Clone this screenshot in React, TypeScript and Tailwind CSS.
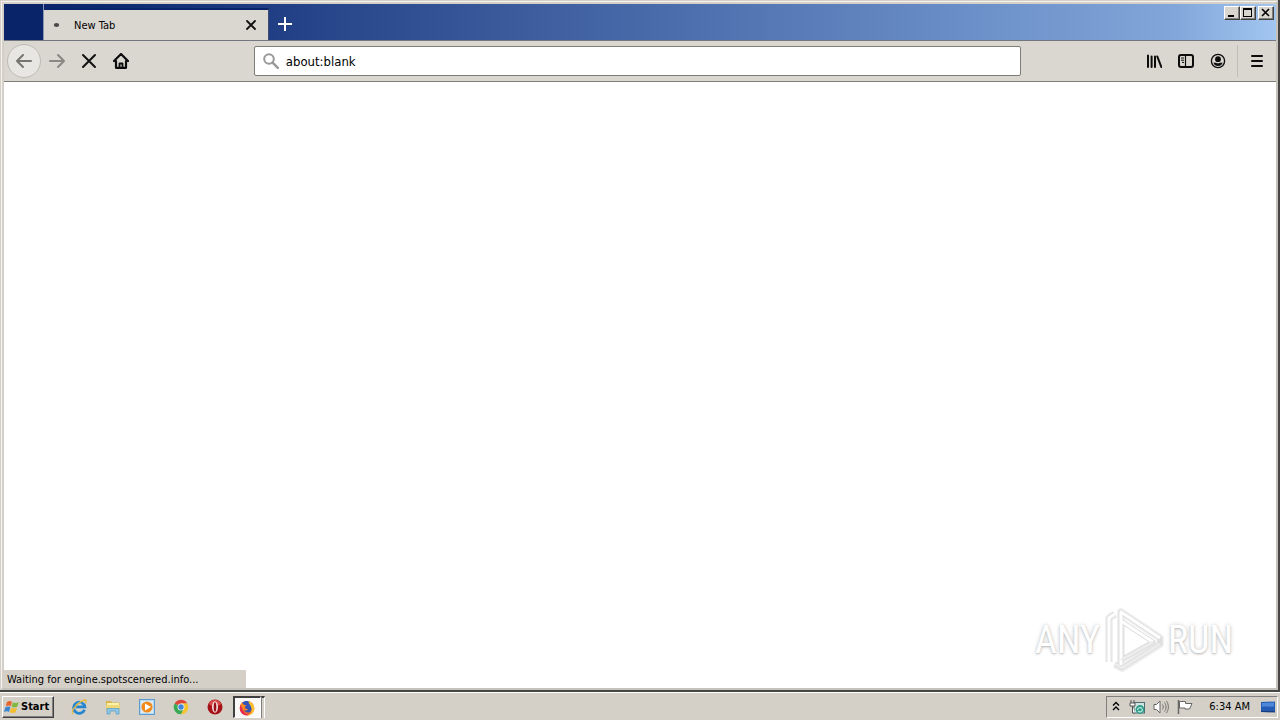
import { useState } from "react";
import type { ReactNode } from "react";

function CaptionButton({ label, children }: { label: string; children: ReactNode }) {
  return (
    <button
      type="button"
      aria-label={label}
      className="flex h-[14px] w-4 items-center justify-center border border-t-white border-l-white border-r-[#404040] border-b-[#404040] bg-[#d9d6cf] shadow-[inset_-1px_-1px_0_#808080]"
    >
      {children}
    </button>
  );
}

function ToolButton({ label, children }: { label: string; children: ReactNode }) {
  return (
    <button type="button" aria-label={label} className="flex size-8 items-center justify-center">
      {children}
    </button>
  );
}

function TabStrip() {
  return (
    <header className="flex h-9 items-stretch bg-[linear-gradient(90deg,#0a246a_0%,#0c286f_8%,#27458a_25%,#6b8fc8_76%,#82a6d9_92%,#a2c6f0_100%)]">
      <div className="w-10 border-r border-[#8a94b5] bg-[#0a246a]" />
      <div className="mt-1 flex w-[225px] items-center border-t-2 border-r border-t-[#0a246a] border-r-[#404d70] bg-[#dad7d1] pr-[7px] pl-2">
        <svg className="size-4" viewBox="0 0 16 16" aria-hidden="true">
          <ellipse cx="4.5" cy="8" rx="2.7" ry="2" fill="#4a4a4a" />
        </svg>
        <span className="ml-[6px] grow pt-px text-[11px] leading-4 text-black">New Tab</span>
        <button type="button" aria-label="Close tab" className="flex size-5 items-center justify-center">
          <svg className="size-3" viewBox="0 0 12 12" aria-hidden="true">
            <path d="M2 2l8 8M10 2l-8 8" stroke="#111" strokeWidth="1.8" strokeLinecap="round" />
          </svg>
        </button>
      </div>
      <button type="button" aria-label="New tab" className="flex w-8 items-center justify-center pt-1">
        <svg className="size-4" viewBox="0 0 16 16" aria-hidden="true">
          <path d="M8 1v14M1 8h14" stroke="#fff" strokeWidth="2" />
        </svg>
      </button>
      <div className="ml-auto flex pt-[2px] pr-[2px]">
        <CaptionButton label="Minimize">
          <svg className="size-3" viewBox="0 0 12 12" shapeRendering="crispEdges" aria-hidden="true">
            <path d="M2 8h6v2H2z" />
          </svg>
        </CaptionButton>
        <CaptionButton label="Maximize">
          <svg className="size-3" viewBox="0 0 12 12" shapeRendering="crispEdges" aria-hidden="true">
            <path fillRule="evenodd" d="M1 1h9v9H1zM2 3v6h7V3z" />
          </svg>
        </CaptionButton>
        <div className="w-[2px]" />
        <CaptionButton label="Close">
          <svg className="size-3" viewBox="0 0 12 12" aria-hidden="true">
            <path d="M2 2l7 7M9 2l-7 7" stroke="#000" strokeWidth="1.6" />
          </svg>
        </CaptionButton>
      </div>
    </header>
  );
}

function Toolbar() {
  const [address, setAddress] = useState("about:blank");
  return (
    <nav className="flex h-[42px] items-center border-t border-b border-t-[#737780] border-b-[#807e7a] bg-[#dad7d1]">
      <div className="flex flex-[250] items-center pl-[3px]">
        <button
          type="button"
          aria-label="Back"
          className="flex size-[34px] items-center justify-center rounded-full border border-[#bfbcb7] bg-[#e8e6e2]"
        >
          <svg className="size-4" viewBox="0 0 16 16" fill="none" stroke="#777571" strokeWidth="2" strokeLinecap="round" strokeLinejoin="round" aria-hidden="true">
            <path d="M15 8H1M7 2L1 8l6 6" />
          </svg>
        </button>
        <ToolButton label="Forward">
          <svg className="size-4" viewBox="0 0 16 16" fill="none" stroke="#8a8884" strokeWidth="2" strokeLinecap="round" strokeLinejoin="round" aria-hidden="true">
            <path d="M1 8h14M9 2l6 6-6 6" />
          </svg>
        </ToolButton>
        <ToolButton label="Stop">
          <svg className="size-4" viewBox="0 0 16 16" fill="none" stroke="#111" strokeWidth="2" strokeLinecap="round" aria-hidden="true">
            <path d="M2 2l12 12M14 2L2 14" />
          </svg>
        </ToolButton>
        <ToolButton label="Home">
          <svg className="size-4" viewBox="0 0 16 16" fill="none" stroke="#0c0c0d" strokeWidth="2.2" strokeLinecap="round" strokeLinejoin="round" aria-hidden="true">
            <path d="M1 8l7-7 7 7M3 8v6.800h10V8" />
            <path d="M6.500 15v-4.500h3V15" strokeWidth="1.800" />
          </svg>
        </ToolButton>
      </div>
      <label className="flex h-[30px] flex-[767] items-center rounded-[2px] border border-[#7e7c77] bg-white pl-2">
        <svg className="size-4" viewBox="0 0 16 16" fill="none" stroke="#999" aria-hidden="true">
          <circle cx="6" cy="6" r="4.8" strokeWidth="2" />
          <path d="M9.6 9.6l5.2 5.2" strokeWidth="2.4" strokeLinecap="round" />
        </svg>
        <input
          type="text"
          aria-label="Search or enter address"
          value={address}
          onChange={(event) => setAddress(event.target.value)}
          className="ml-[7px] min-w-0 grow bg-transparent pt-px text-[13px] leading-5 text-black outline-none"
        />
      </label>
      <div className="flex flex-[255] items-center justify-end self-stretch pr-[3px]">
        <ToolButton label="Library">
          <svg className="size-4" viewBox="0 0 16 16" fill="none" stroke="#0c0c0d" strokeWidth="2" strokeLinecap="round" aria-hidden="true">
            <path d="M2 2.5v11.5M5.6 3.5v10.5M9 3.5v10.5M11.3 3.5l4 10.5" />
          </svg>
        </ToolButton>
        <ToolButton label="Sidebars">
          <svg className="size-4" viewBox="0 0 16 16" fill="none" stroke="#0c0c0d" aria-hidden="true">
            <rect x="1" y="2" width="14" height="12" rx="2" strokeWidth="2" />
            <path d="M7.5 3v10" strokeWidth="1.2" />
            <path d="M3 5h3M3 7.2h3M4 9.4h2" strokeWidth="1" />
          </svg>
        </ToolButton>
        <ToolButton label="Account">
          <svg className="size-4" viewBox="0 0 16 16" aria-hidden="true">
            <circle cx="8" cy="8" r="6.6" fill="none" stroke="#0c0c0d" strokeWidth="1.3" />
            <circle cx="8" cy="6.2" r="2.9" fill="#0c0c0d" />
            <path d="M3.4 9.4c1 .2 2 .4 2.6.3 1.200.7 2.800.7 4 0 .6.1 1.600-.1 2.600-.3-.6 2.200-2.400 3.600-4.600 3.600s-4-1.400-4.600-3.600z" fill="#0c0c0d" />
          </svg>
        </ToolButton>
        <div className="ml-[3px] h-8 border-l border-[#c2bfb9]" />
        <div className="ml-[3px]">
          <ToolButton label="Open menu">
            <svg className="size-4" viewBox="0 0 16 16" stroke="#0c0c0d" strokeWidth="2" strokeLinecap="round" aria-hidden="true">
              <path d="M3 3h10M3 8h10M3 13h10" />
            </svg>
          </ToolButton>
        </div>
      </div>
    </nav>
  );
}

function Watermark() {
  return (
    <div className="absolute right-[43px] bottom-4 flex items-center gap-1 font-['Roboto_Condensed','Open_Sans_Condensed','Noto_Sans_Condensed',Roboto,sans-serif] text-[38px] leading-[64px] text-white [text-shadow:0_1px_2px_#bdbdbd,0_0_4px_#d0d0d0]">
      <span>ANY</span>
      <svg className="h-16 w-[60px]" viewBox="0 0 60 64" fill="none" strokeLinejoin="round" aria-hidden="true">
        <g stroke="#f0f0f0" strokeWidth="8">
          <path d="M5 54V10l6-4M17 57V4l39 26v6L18 60l-7-4" />
        </g>
        <g stroke="#dedede" strokeWidth="5">
          <path d="M5 54V10l6-4M17 57V4l39 26v6L18 60l-7-4" />
          <path d="M17 13l32 21-32 18z" />
        </g>
        <g stroke="#fff" strokeWidth="3">
          <path d="M5 54V10l6-4M17 57V4l39 26" />
          <path d="M17 13l32 21" />
        </g>
        <g stroke="#ececec" strokeWidth="3">
          <path d="M56 36L18 60l-7-4M49 34L17 52" />
        </g>
      </svg>
      <span>RUN</span>
    </div>
  );
}

function ExplorerIcon() {
  return (
    <svg className="size-4" viewBox="0 0 16 16" fill="none" aria-hidden="true">
      <path d="M13.500 10.800A5.600 5.600 0 1 1 13.800 7.800H5" stroke="#2585ce" strokeWidth="2.800" />
      <path d="M5 5.800C7 3 10 3.200 11 5.800" stroke="#7cc4f0" strokeWidth="1" />
      <path d="M2 14.800C-1 12 8 2 14 1c2 .3 1.200 2.200.6 3.200" stroke="#e4b83c" strokeWidth="1.300" />
    </svg>
  );
}

function FolderIcon() {
  return (
    <svg className="size-4" viewBox="0 0 16 16" aria-hidden="true">
      <path d="M1 2h5l1 1.500h7.500V11H1z" fill="#d8b64c" />
      <path d="M2 4h12v6H2z" fill="#fbf0a8" />
      <path d="M1 6h14l-.6 5H1.500z" fill="#f0d878" />
      <path d="M2 15V9.500h12V15h-3v-3H5v3z" fill="#8fc7e4" stroke="#5aa2ca" strokeWidth=".8" />
    </svg>
  );
}

function MediaPlayerIcon() {
  return (
    <svg className="size-4" viewBox="0 0 16 16" aria-hidden="true">
      <rect x=".5" y=".5" width="15" height="15" fill="#b8d8f0" stroke="#5b9bd0" />
      <rect x="2" y="2" width="12" height="12" fill="#dceaf4" />
      <circle cx="8" cy="8" r="5.600" fill="#f28b1c" />
      <path d="M6 4.500v7L12 8z" fill="#fff" />
    </svg>
  );
}

function ChromeIcon() {
  return (
    <svg className="size-4" viewBox="0 0 16 16" aria-hidden="true">
      <path d="M8 8L1.700 4.400A7.200 7.200 0 0 1 14.300 4.400L8 4.500z" fill="#db4437" />
      <path d="M8 8L1.700 4.400A7.200 7.200 0 0 0 8 15.200L11 9.700z" fill="#38a853" />
      <path d="M8 4.400h6.300A7.200 7.200 0 0 1 8 15.200l3.100-5.400z" fill="#f7c52b" />
      <circle cx="8" cy="8" r="3.500" fill="#f4f4f4" />
      <circle cx="8" cy="8" r="2.700" fill="#4285d8" />
    </svg>
  );
}

function OperaIcon() {
  return (
    <svg className="size-4" viewBox="0 0 16 16" aria-hidden="true">
      <circle cx="8" cy="8" r="7.500" fill="#a51218" />
      <path d="M2 5a6.500 6.500 0 0 1 12 0c-3 3-9 3-12 0z" fill="#d94a48" />
      <ellipse cx="8" cy="8" rx="3" ry="5.800" fill="#f5dede" />
      <ellipse cx="8" cy="8" rx="1.300" ry="4.800" fill="#981015" />
    </svg>
  );
}

function FirefoxIcon() {
  return (
    <svg className="size-4" viewBox="0 0 16 16" aria-hidden="true">
      <circle cx="8" cy="8.200" r="7.300" fill="#f2672a" />
      <path d="M9 1c4 1 6.500 4 6.300 8-.3 4-3.300 6.500-7.300 6.500 3-1 5-3 4.500-6.500C12 6 9 5 9 1z" fill="#fdc12e" />
      <path d="M1.500 4.500C.5 7 .5 11 3 13.500c2 2 5 2.300 7 1.200C6 14.700 3 11 3.500 7z" fill="#e62b55" />
      <path d="M3 2.500C5 1 8 .5 9.500 1.200c0 3 3 4 3 7.800 0 1.500-.7 2.500-2 3.200-2 .8-5-.2-5.500-2.200 1.500.8 3 .4 4-.7C7 9 5.500 8 5.800 6.500L3 5z" fill="#3455b8" />
      <path d="M1.500 5l1.300-2.500L5 4.800l2.500.7L5.500 7c0 2 1.500 2.500 3.500 2.200-1 1.500-3.500 1.500-5 .3z" fill="#ff8a20" />
    </svg>
  );
}

const launchers = [
  { label: "Internet Explorer", icon: <ExplorerIcon /> },
  { label: "Windows Explorer", icon: <FolderIcon /> },
  { label: "Windows Media Player", icon: <MediaPlayerIcon /> },
  { label: "Google Chrome", icon: <ChromeIcon /> },
  { label: "Opera", icon: <OperaIcon /> },
];

function Taskbar() {
  return (
    <footer className="flex h-7 items-center border-t border-white bg-[#d4d0c8] pt-px pr-[2px] pl-[2px]">
      <button
        type="button"
        className="flex h-[22px] w-[52px] items-center gap-px border border-t-white border-l-white border-r-[#404040] border-b-[#404040] pl-px text-[11px] leading-4 font-bold text-black shadow-[inset_-1px_-1px_0_#808080]"
      >
        <svg className="size-4 shrink-0" viewBox="0 0 16 16" aria-hidden="true">
          <path d="M3 3c2-1.300 3.500-1.200 5-.2L6.700 7.300c-1.500-1-3-1-5 0z" fill="#e8642c" />
          <path d="M8.800 3.200c2 1 3.500 1 6 0l-1.500 4.500c-2 1-3.800 1-5.800 0z" fill="#82b843" />
          <path d="M1.400 8.300c2-1 3.500-1 5 0L5 13c-1.500-1-3-1-5 0z" fill="#3b86cf" />
          <path d="M7.200 8.700c2 1 3.800 1 5.800 0l-1.400 4.600c-2 1-3.800 1-5.800 0z" fill="#f4bd30" />
        </svg>
        Start
      </button>
      <div className="flex grow items-center pl-2">
        {launchers.map((item) => (
          <button key={item.label} type="button" aria-label={item.label} className="flex h-[22px] w-[34px] items-center justify-center">
            {item.icon}
          </button>
        ))}
        <button
          type="button"
          aria-label="Firefox"
          className="ml-px flex h-[22px] w-7 items-center justify-center border-t-2 border-l-2 border-r border-b border-t-[#404040] border-l-[#404040] border-r-white border-b-white bg-[#faf9f8] pr-[2px]"
        >
          <FirefoxIcon />
        </button>
        <div className="h-[22px] w-1 border-t-2 border-r border-l border-t-[#404040] border-r-white border-l-[#808080]" />
      </div>
      <div className="flex h-[22px] items-center border border-t-[#808080] border-l-[#808080] border-r-white border-b-white pr-px pl-[4px]">
        <button type="button" aria-label="Show hidden icons" className="mr-2">
          <svg className="h-4 w-[10px]" viewBox="0 0 10 16" fill="none" stroke="#000" strokeWidth="1.400" aria-hidden="true">
            <path d="M2 6.500L5 3.500l3 3M2 11l3-3 3 3" />
          </svg>
        </button>
        <svg className="mr-2 size-4" viewBox="0 0 16 16" role="img" aria-label="Network">
          <rect x="5" y="3.500" width="10.500" height="10.500" fill="#cfe4e0" stroke="#4f6d70" />
          <path d="M2 1v3M5 1v3M1 4h5v3H1zM3.500 7v7H6" fill="#fff" stroke="#555" />
          <circle cx="11" cy="10.500" r="4.400" fill="#2f9a8a" />
          <path d="M8.500 11a2.600 2.600 0 0 1 4.500-1.500M13.500 10a2.600 2.600 0 0 1-4.500 2" stroke="#b6ecdf" strokeWidth="1.200" fill="none" />
        </svg>
        <svg className="mr-2 size-4" viewBox="0 0 16 16" fill="none" stroke="#74726e" role="img" aria-label="Volume">
          <path d="M1 5.500h2.500L7 2v12L3.500 10.500H1z" fill="#fff" stroke="#666" />
          <path d="M9.500 5.500c1 1.500 1 3.500 0 5M11.500 3.500c2 2.500 2 6.500 0 9M13.500 2c2.500 3.500 2.500 8.500 0 12" />
        </svg>
        <svg className="mr-4 size-4" viewBox="0 0 16 16" role="img" aria-label="Action Center">
          <path d="M1.500 1v14" stroke="#666" strokeWidth="1.500" />
          <path d="M2.500 2.500h6V4.500H15L12.500 10H8V9H2.500z" fill="#fff" stroke="#666" />
        </svg>
        <time className="mr-[10px] text-[11px] leading-4 whitespace-nowrap text-black">6:34 AM</time>
        <svg className="size-4" viewBox="0 0 16 16" role="img" aria-label="Show desktop">
          <path d="M1 3l14-.5v10L1 12z" fill="#235bb5" />
          <path d="M2 4l12-.5v4C9 8 5 7 2 8z" fill="#4f88d8" />
          <path d="M1 12h14v1.500L1 13z" fill="#173d7c" />
        </svg>
      </div>
    </footer>
  );
}

export default function App() {
  return (
    <div className="flex min-h-screen flex-col bg-[#d4d0c8] font-['Tahoma','DejaVu_Sans_Condensed','Noto_Sans',sans-serif]">
      <div className="flex grow flex-col border-r-2 border-b-2 border-[#484644] pt-px pl-px">
        <div className="flex grow flex-col border-t border-r-2 border-b-2 border-l border-t-[#f4f3f0] border-r-[#c5c2bc] border-b-[#c5c2bc] border-l-[#f4f3f0] pt-[2px] pl-[2px]">
          <TabStrip />
          <Toolbar />
          <main className="relative flex grow flex-col justify-end bg-white">
            <Watermark />
            <p className="h-[18px] w-[242px] bg-[#d4d0c8] pt-px pl-[3px] text-[11px] leading-[18px] whitespace-nowrap text-black">
              Waiting for engine.spotscenered.info...
            </p>
          </main>
        </div>
      </div>
      <Taskbar />
    </div>
  );
}
